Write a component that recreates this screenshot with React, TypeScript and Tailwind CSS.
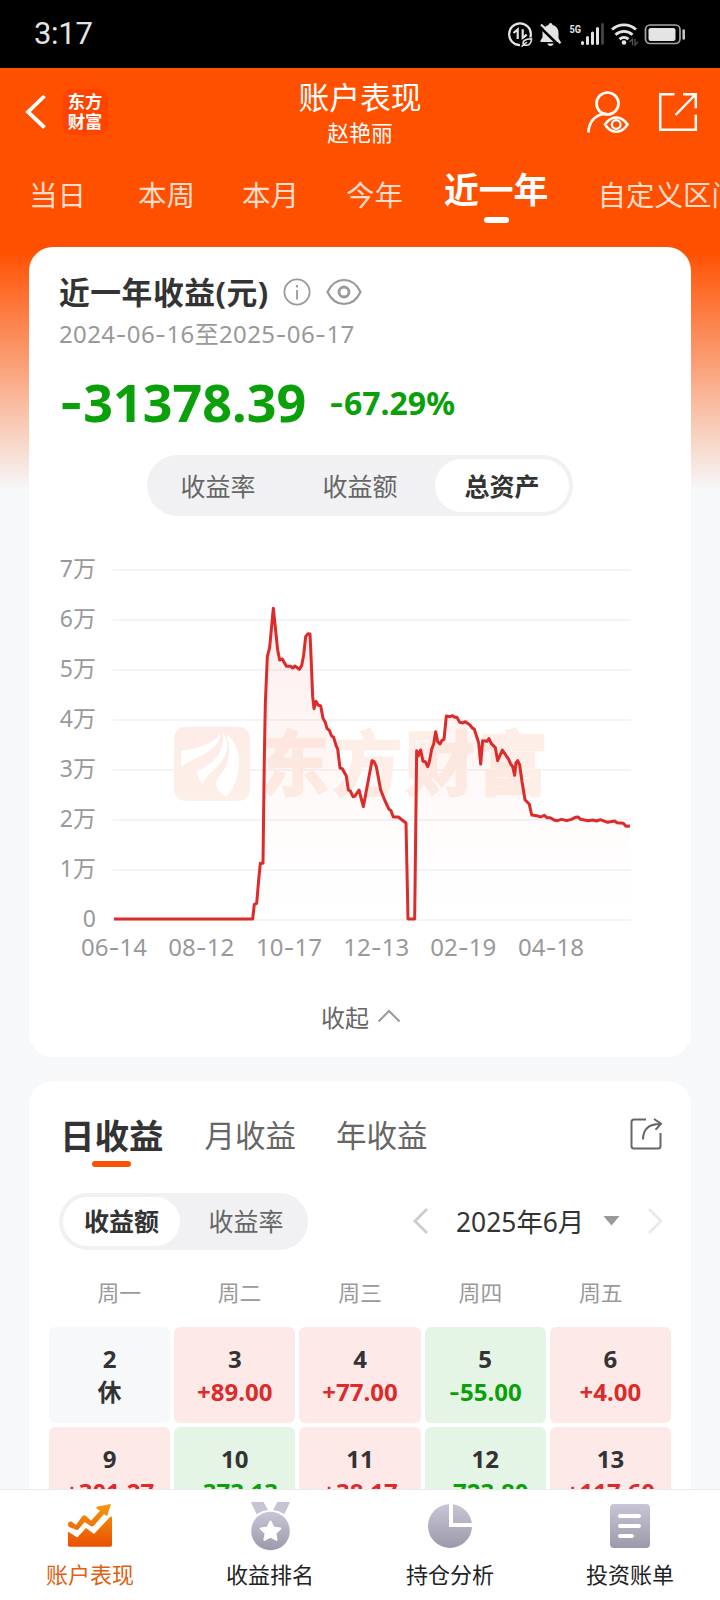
import { useState } from "react";
import clsx from "clsx";

// chart units: 3 per css pixel
const LINE: [number, number][] = [
  [222, 1137], [638, 1137], [643, 1093], [650, 1090], [656, 1020], [661, 970], [669, 970], [673, 650], [676, 490],
  [682, 350], [689, 322], [700, 205], [713, 330], [719, 360], [727, 357], [739, 379], [752, 379], [758, 384],
  [765, 378], [778, 388], [785, 377], [791, 345], [797, 290], [804, 281], [810, 282], [814, 370], [818, 470],
  [822, 506], [828, 484], [835, 496], [842, 497], [849, 535], [855, 545], [861, 565], [868, 571], [875, 588],
  [881, 592], [888, 616], [893, 627], [900, 684], [907, 686], [919, 708], [925, 750], [931, 753], [939, 770],
  [944, 769], [957, 750], [970, 800], [996, 662], [1002, 665], [1009, 680], [1022, 750], [1034, 780], [1047, 808],
  [1053, 812], [1060, 831], [1075, 831], [1098, 849], [1104, 1137], [1124, 1137], [1130, 632], [1135, 648],
  [1142, 630], [1149, 664], [1156, 665], [1163, 680], [1168, 666], [1175, 628], [1181, 612], [1187, 575],
  [1193, 605], [1200, 612], [1206, 601], [1212, 598], [1219, 528], [1230, 530], [1238, 527], [1244, 532],
  [1251, 532], [1259, 547], [1269, 549], [1276, 545], [1290, 555], [1296, 563], [1303, 568], [1316, 608],
  [1322, 672], [1328, 602], [1341, 604], [1347, 596], [1354, 611], [1366, 623], [1373, 662], [1387, 630],
  [1406, 658], [1412, 672], [1418, 680], [1424, 706], [1428, 668], [1433, 662], [1439, 675], [1446, 725],
  [1455, 779], [1468, 793], [1475, 825], [1490, 827], [1502, 831], [1513, 826], [1521, 833], [1531, 833],
  [1542, 840], [1552, 842], [1565, 838], [1580, 842], [1594, 838], [1606, 832], [1614, 831], [1622, 838],
  [1645, 842], [1658, 840], [1670, 843], [1681, 839], [1703, 847], [1724, 843], [1731, 848], [1750, 850],
  [1758, 859], [1770, 858],
];

const Y_LABELS = ["7万", "6万", "5万", "4万", "3万", "2万", "1万", "0"];
const X_LABELS = [
  { x: 222, text: "06-14" },
  { x: 484, text: "08-12" },
  { x: 747, text: "10-17" },
  { x: 1009, text: "12-13" },
  { x: 1270, text: "02-19" },
  { x: 1533, text: "04-18" },
];

const DAYS = [
  { day: "2", value: "休" },
  { day: "3", value: "+89.00" },
  { day: "4", value: "+77.00" },
  { day: "5", value: "-55.00" },
  { day: "6", value: "+4.00" },
  { day: "9", value: "+301.27" },
  { day: "10", value: "-373.13" },
  { day: "11", value: "+38.17" },
  { day: "12", value: "-723.80" },
  { day: "13", value: "+117.60" },
];

// Inter has the longer hyphen, the digits stay in Noto Sans
function Num({ children }: { children: string }) {
  return (
    <>
      {children.split(/(-)/).map((part, i) =>
        part === "-" ? <span key={i} className="font-['Inter']">-</span> : part,
      )}
    </>
  );
}

function StatusBar() {
  return (
    <div className="flex h-[68px] shrink-0 items-center justify-between bg-black pl-[34px] pr-[34px] text-[#e4e4e4]">
      <span className="font-['Roboto'] text-[31px] leading-[68px] tracking-[-0.3px]">3:17</span>
      <svg width="180" height="32" viewBox="506 18 180 32" fill="none" className="shrink-0">
        <circle cx="520" cy="34.3" r="10.9" stroke="#e4e4e4" strokeWidth="2.2" />
        <path d="M513.500 33l4.200-3.600V39M522.700 29.300V38l4-3.400" stroke="#e4e4e4" strokeWidth="2.200" />
        <path d="M520 47.500v-4c1-5 5-6.500 13-6v5l-6 5z" fill="#000" />
        <path d="M523.500 45c-1.500-4 1.500-6 8-6.300 0 5-2.500 7.500-8 6.300zM521.500 46.500l5.500-4.500" stroke="#e4e4e4" strokeWidth="1.600" />
        <path d="M550.500 23c1.500 0 2 1 2 2 4 1 6 4 6 8v5l2 4h-20v-1.500l2-3v-5c0-4 3-6.500 6-7.500 0-1 1-2 2-2z" fill="#e4e4e4" />
        <path d="M547.500 43.500h6c0 1.500-1.500 2.500-3 2.500s-3-1-3-2.500z" fill="#e4e4e4" />
        <path d="M540 27l20.500 20" stroke="#000" strokeWidth="2.500" />
        <path d="M541 24.500l19.500 18.800" stroke="#e4e4e4" strokeWidth="2.200" />
        <text x="569.500" y="32.500" fontSize="11.500" fontWeight="700" fill="#e4e4e4" fontFamily="Roboto, sans-serif" textLength="11.500" lengthAdjust="spacingAndGlyphs">5G</text>
        <path d="M582.500 42.500v1M587.500 37.500v6M592.500 33v10.500M597.500 28.500v15" stroke="#e4e4e4" strokeWidth="3" strokeLinecap="round" />
        <path d="M602.500 24.500v19" stroke="#444" strokeWidth="2.800" strokeLinecap="round" />
        <path d="M612 29.500c7-6.300 17-6.300 24 0M615.500 34.700c5-4.500 12-4.500 17 0M619.500 39.200c3-2.500 6-2.500 9 0" stroke="#e4e4e4" strokeWidth="2.800" />
        <circle cx="624" cy="42.500" r="2.300" fill="#e4e4e4" />
        <path d="M629.500 42l3-2.800v6M635 39v6l3-3" stroke="#555" strokeWidth="1.300" />
        <rect x="645.500" y="25" width="34.500" height="18.500" rx="4.500" stroke="#a5a5a5" strokeWidth="1.700" />
        <rect x="648.500" y="28" width="27" height="13" rx="2.200" fill="#e4e4e4" />
        <path d="M683.700 30.500v8" stroke="#c4c4c4" strokeWidth="2.600" strokeLinecap="round" />
      </svg>
    </div>
  );
}

function Header() {
  return (
    <header className="grid h-[88px] shrink-0 grid-cols-3 text-white">
      <div className="flex h-[88px] items-center pl-[25px]">
        <svg width="21" height="36" viewBox="0 0 21 36" fill="none" stroke="#fff" strokeWidth="3.800">
          <path d="M19.500 2L3 18l16.500 15.500" />
        </svg>
        <div className="ml-4 flex h-[46px] w-[46px] flex-col items-center justify-center rounded-[10px] bg-[#ff4400] text-[17.300px] font-bold leading-[20px]">
          <span>东方</span>
          <span>财富</span>
        </div>
      </div>
      <div className="flex flex-col items-center pt-[9px]">
        <h1 className="whitespace-nowrap text-[30.800px] leading-[40px]">账户表现</h1>
        <span className="text-[21.800px] leading-[32px]">赵艳丽</span>
      </div>
      <div className="flex h-[88px] justify-end gap-[28px] pr-[22px] pt-[22px]">
        <svg width="44" height="44" viewBox="586 90 44 44" fill="none" stroke="#fff" strokeWidth="2.700">
          <circle cx="607.500" cy="103.500" r="11" />
          <path d="M588.500 132.500c0-10 6-17 15-18.500h4" />
          <path d="M605 124.500c6-9.500 16.500-9.500 22.500 0-6 9.500-16.500 9.500-22.500 0z" strokeWidth="2.500" />
          <circle cx="616.200" cy="124.500" r="4.300" strokeWidth="2.300" />
        </svg>
        <svg width="40" height="44" viewBox="658 90 40 44" fill="none" stroke="#fff" strokeWidth="2.500">
          <path d="M674.500 94.200h-14.300v35.600h35.600v-15" />
          <path d="M683 94.200h12.800v14M695.500 94.500l-20 20.500" />
        </svg>
      </div>
    </header>
  );
}

function RangeTabs() {
  return (
    <nav className="flex h-[91px] shrink-0 items-start overflow-hidden whitespace-nowrap pl-[29px] text-[28.500px] leading-[40px] text-[#ffdccb]">
      <span className="mt-[19px] w-[57px] shrink-0">当日</span>
      <span className="ml-[52px] mt-[19px] w-[57px] shrink-0">本周</span>
      <span className="ml-[47px] mt-[19px] w-[57px] shrink-0">本月</span>
      <span className="ml-[47px] mt-[19px] w-[57px] shrink-0">今年</span>
      <div className="ml-[41px] mt-[12px] flex shrink-0 flex-col items-center text-white">
        <span className="text-[34.800px] font-bold leading-[44px]">近一年</span>
        <span className="mt-[5px] h-[6px] w-[25px] rounded-full bg-white" />
      </div>
      <span className="ml-[49px] mt-[19px] shrink-0">自定义区间</span>
    </nav>
  );
}

function AssetChart() {
  const path = LINE.map(([x, y]) => `${x},${y}`).join(" ");
  return (
    <svg viewBox="0 0 1920 1290" className="-ml-5 h-[430px] w-[640px] shrink-0" fill="none">
      <defs>
        <linearGradient id="area" x1="0" y1="200" x2="0" y2="1137" gradientUnits="userSpaceOnUse">
          <stop offset="0" stopColor="#ee2a2a" stopOpacity="0.08" />
          <stop offset="0.450" stopColor="#f03a2a" stopOpacity="0.045" />
          <stop offset="0.800" stopColor="#f04a2a" stopOpacity="0.008" />
          <stop offset="1" stopColor="#f04a2a" stopOpacity="0" />
        </linearGradient>
        <linearGradient id="mark" x1="0" y1="560" x2="0" y2="783" gradientUnits="userSpaceOnUse">
          <stop offset="0" stopColor="#fdebe7" />
          <stop offset="1" stopColor="#fdf0e8" />
        </linearGradient>
      </defs>

      {Y_LABELS.map((label, i) => (
        <g key={label}>
          <path d={`M218 ${90 + i * 150}H1773`} stroke="#f4f4f5" strokeWidth="6" />
          <text x="168" y={112 + i * 150} textAnchor="end" fontSize="69" fill="#999">{label}</text>
        </g>
      ))}

      {/* watermark */}
      <rect x="402" y="560" width="228" height="223" rx="36" fill="url(#mark)" />
      <path d="M425 632C470 626 525 610 540 582c0 35-40 60-75 74-20 9-33 15-39 26-3-14-4-32-1-50z" fill="#fff" />
      <path d="M548 578c28 30 10 80-25 110-15 14-28 25-36 46-8-14-14-26-17-41 50-20 85-55 78-115z" fill="#fff" />
      <path d="M560 584c35 25 40 70 36 100-6 42-20 68-38 87-16-12-28-24-31-40 5-30 60-50 33-147z" fill="#fff" />
      <text x="658" y="750" fontSize="210" fontWeight="700" fill="#fdefe7" stroke="#fdefe7" strokeWidth="7" textLength="866">东方财富</text>

      <polygon points={`222,1137 ${path} 1770,1137`} fill="url(#area)" />
      <polyline points={path} stroke="#dd2a2a" strokeWidth="9" strokeLinejoin="round" />

      {X_LABELS.map((l) => (
        <text key={l.text} x={l.x} y="1247" textAnchor="middle" fontSize="72" fill="#999" textLength="198">
          {l.text.slice(0, 2)}
          <tspan fontFamily="Inter">-</tspan>
          {l.text.slice(3)}
        </text>
      ))}
    </svg>
  );
}

function SummaryCard() {
  const [metric, setMetric] = useState("总资产");
  return (
    <section className="flex h-[810px] shrink-0 flex-col rounded-[24px] bg-white pl-[30px] pt-[21px]">
      <div className="flex h-12 items-center">
        <h2 className="w-[210px] whitespace-nowrap text-[30.800px] font-bold leading-[46px] tracking-[0.500px] text-[#333]">近一年收益(元)</h2>
        <svg width="28" height="28" viewBox="0 0 28 28" fill="none" stroke="#999" strokeWidth="1.800" className="ml-[14px]">
          <circle cx="14" cy="14" r="12.600" />
          <path d="M14 12v9.500M14 7v2.500" />
        </svg>
        <svg width="36" height="28" viewBox="0 0 36 28" fill="none" stroke="#999" strokeWidth="2.200" className="ml-[14.500px]">
          <path d="M1.500 14C9-2 27-2 34.500 14 27 30 9 30 1.500 14z" strokeLinejoin="round" />
          <circle cx="18" cy="14" r="5" strokeWidth="2.800" />
        </svg>
      </div>
      <p className="text-[24px] leading-[36px] tracking-[0.370px] text-[#999]"><Num>2024-06-16至2025-06-17</Num></p>
      <div className="mt-[18px] flex h-[64px] items-center font-bold text-[#09a009]">
        <span className="w-[270px] text-[52px] leading-[64px]"><Num>-31378.39</Num></span>
        <span className="text-[32px] leading-[64px]"><Num>-67.29%</Num></span>
      </div>
      <div className="ml-[88px] mt-[20px] flex h-[61px] w-[426px] items-center rounded-full bg-[#f1f1f4] pr-1 text-[25px] leading-[52px] text-[#666]">
        {["收益率", "收益额", "总资产"].map((m) => (
          <button
            key={m}
            type="button"
            onClick={() => setMetric(m)}
            className={clsx("h-[53px] rounded-full", metric === m ? "ml-auto w-[134px] bg-white font-bold text-[#333]" : "w-[142px]")}
          >
            {m}
          </button>
        ))}
      </div>
      <div className="mt-[24px] pl-px">
        <AssetChart />
      </div>
      <button type="button" className="mr-[28px] mt-[30px] flex items-center justify-center gap-[8px] text-[24px] leading-[36px] text-[#666]">
        收起
        <svg width="24" height="14" viewBox="0 0 24 14" fill="none" stroke="#999" strokeWidth="2" className="-mt-1">
          <path d="M1.500 12.500L12 2l10.500 10.500" />
        </svg>
      </button>
    </section>
  );
}

function CalendarCard() {
  return (
    <section className="mt-6 flex h-[600px] shrink-0 flex-col rounded-t-[24px] bg-white">
      <div className="flex h-[92px] items-start pl-[31px] pr-[28px] text-[30.500px] leading-[44px] text-[#666]">
        <div className="mt-[33px] flex flex-col items-center">
          <span className="text-[34.500px] font-bold leading-[44px] text-[#333]">日收益</span>
          <span className="mt-[3px] h-[6px] w-[39px] rounded-full bg-[#f75205]" />
        </div>
        <span className="ml-[41px] mt-[32px]">月收益</span>
        <span className="ml-[40px] mt-[32px]">年收益</span>
        <svg width="34" height="34" viewBox="0 0 34 34" fill="none" stroke="#666" strokeWidth="2" className="ml-auto mt-[36px]">
          <path d="M17 2.500H5c-1.500 0-2.500 1-2.500 2.500v24c0 1.500 1 2.500 2.500 2.500h24c1.500 0 2.500-1 2.500-2.500V16" />
          <path d="M14 22.500c0-9 4.500-15.500 17-15.500M25 2l7 4.600-5.500 6.200" />
        </svg>
      </div>

      <div className="mt-[20px] flex h-[57px] items-center pl-[30px] pr-[27px]">
        <div className="flex h-[57px] w-[249px] items-center rounded-full bg-[#f1f1f4] p-1 text-[25px] leading-[49px] text-[#666]">
          <button type="button" className="h-[49px] w-[117px] rounded-full bg-white font-bold text-[#333]">收益额</button>
          <button type="button" className="ml-[8px] h-[49px] flex-1">收益率</button>
        </div>
        <svg width="17" height="28" viewBox="0 0 17 28" fill="none" stroke="#ccc" strokeWidth="2.800" className="ml-[104px] -mt-[2px]">
          <path d="M15 2L3 14l12 12" />
        </svg>
        <span className="ml-[27px] w-[127px] whitespace-nowrap text-[26.400px] leading-[40px] text-[#333]">2025年6月</span>
        <svg width="17" height="10" viewBox="0 0 17 10" className="ml-[20px] -mt-[2px]">
          <path d="M0.500 0h16L8.500 9.500z" fill="#999" />
        </svg>
        <svg width="17" height="28" viewBox="0 0 17 28" fill="none" stroke="#e9e9e9" strokeWidth="2.800" className="ml-auto -mt-[2px]">
          <path d="M2 2l12 12L2 26" />
        </svg>
      </div>

      <div className="mt-[27px] grid h-8 grid-cols-5 pl-[30px] pr-[30px] text-center text-[21.800px] leading-8 text-[#999]">
        {["周一", "周二", "周三", "周四", "周五"].map((d) => (
          <span key={d}>{d}</span>
        ))}
      </div>

      <div className="mt-[18px] grid grid-cols-5 gap-1 pl-[20px] pr-[20px]">
        {DAYS.map((d) => (
          <div
            key={d.day}
            className={clsx(
              "flex h-24 flex-col items-center rounded-[6px] pt-[15px] text-[24px] font-bold leading-[33px]",
              d.value.startsWith("+") && "bg-[#fde9e8] text-[#dd2a2a]",
              d.value.startsWith("-") && "bg-[#e4f5e5] text-[#09a009]",
              d.value === "休" && "bg-[#f7f8fa] text-[#333]",
            )}
          >
            <span className="text-[#333]">{d.day}</span>
            <span><Num>{d.value}</Num></span>
          </div>
        ))}
      </div>
    </section>
  );
}

function BottomNav() {
  return (
    <footer className="grid h-[111px] shrink-0 grid-cols-4 border-t border-[#e9eaec] bg-white text-[22px] leading-[32px] text-[#222]">
      <svg width="0" height="0" className="absolute">
        <defs>
          <linearGradient id="orange" x1="0" y1="2" x2="0" y2="46" gradientUnits="userSpaceOnUse">
            <stop offset="0" stopColor="#f79a10" />
            <stop offset="1" stopColor="#ea5000" />
          </linearGradient>
          <linearGradient id="grey" x1="0" y1="0" x2="0" y2="1">
            <stop offset="0" stopColor="#c8c6d6" />
            <stop offset="1" stopColor="#9b99aa" />
          </linearGradient>
        </defs>
      </svg>
      <div className="flex flex-col items-center pt-[11px] text-[#e06010]">
        <svg width="48" height="50" viewBox="0 0 48 50" fill="url(#orange)">
          <path d="M2 23.500C2 21 3.500 20 5.500 20.500L10 24l6-8.500c1.200-1.500 2.800-1.500 4-.5l5 4.700 9-10-3.500-2.300V5.800L45 3l-4 12.300-3-2.300-10 11.500c-1 1.200-2.200 1.300-3.300.6L18.700 21l-6 7c-1 1.200-2 1.200-3 .5L3 26c-.7-.6-1-1.400-1-2.500z" />
          <path d="M2 30.500l9.300 6L20 27l8 6 16-17c1-1 2-.5 2 .8V44c0 1-.7 1.700-1.700 1.700H3.700C2.700 45.700 2 45 2 44z" />
        </svg>
        <span className="mt-[7px]">账户表现</span>
      </div>
      <div className="flex flex-col items-center pt-[11px]">
        <svg width="48" height="50" viewBox="0 0 48 50">
          <path d="M5 1h12.500l5 9-12 3zM44 1H31.500l-5.200 9 12.200 3z" fill="#c5c3d4" />
          <circle cx="24.500" cy="30" r="21.300" fill="#fff" />
          <circle cx="24.500" cy="30" r="19.300" fill="url(#grey)" />
          <path d="M24.500 20.500l3 6.100 6.800.9-4.900 4.700 1.200 6.700-6.100-3.200-6.100 3.200 1.200-6.700-4.900-4.700 6.800-.9z" fill="#fff" stroke="#fff" strokeWidth="2" strokeLinejoin="round" />
        </svg>
        <span className="mt-[7px]">收益排名</span>
      </div>
      <div className="flex flex-col items-center pt-[11px]">
        <svg width="48" height="50" viewBox="0 0 48 50">
          <circle cx="24" cy="25" r="22" fill="url(#grey)" />
          <path d="M25 2v22h22" stroke="#fff" strokeWidth="4" fill="none" />
        </svg>
        <span className="mt-[7px]">持仓分析</span>
      </div>
      <div className="flex flex-col items-center pt-[11px]">
        <svg width="48" height="50" viewBox="0 0 48 50">
          <rect x="4" y="3" width="40" height="44" rx="4" fill="url(#grey)" />
          <path d="M14 15h19M14 25h19M14 35h12" stroke="#fff" strokeWidth="4" strokeLinecap="round" />
        </svg>
        <span className="mt-[7px]">投资账单</span>
      </div>
    </footer>
  );
}

export default function App() {
  return (
    <div className="flex h-[1600px] w-[720px] flex-col overflow-hidden bg-[#f6f8fa] font-['Noto_Sans','Noto_Sans_CJK_SC',sans-serif]">
      <StatusBar />
      <div className="flex min-h-0 flex-1 flex-col overflow-hidden bg-[linear-gradient(180deg,#ff5000_0px,#ff5000_182px,#f6f8fa_422px)]">
        <Header />
        <RangeTabs />
        <main className="flex min-h-0 flex-1 flex-col overflow-hidden px-[29px]">
          <SummaryCard />
          <CalendarCard />
        </main>
      </div>
      <BottomNav />
    </div>
  );
}
